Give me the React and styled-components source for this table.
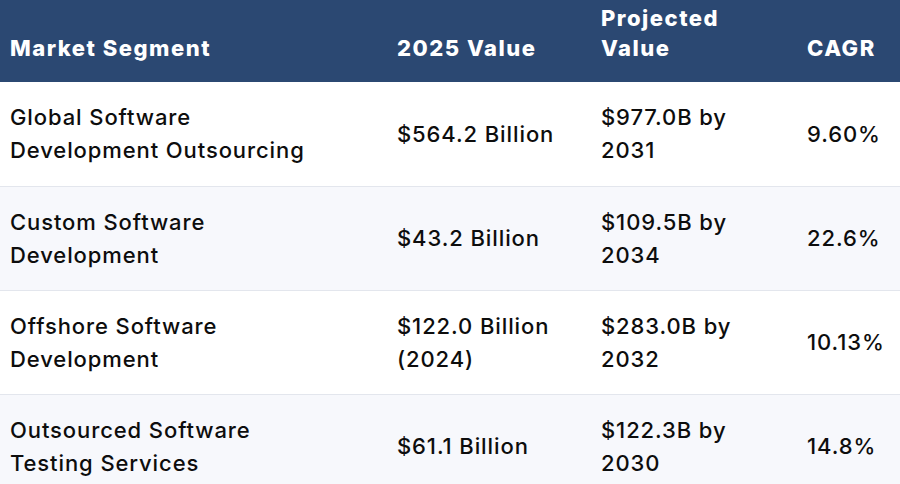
import styled, { createGlobalStyle } from "styled-components";

const GlobalStyle = createGlobalStyle`
  html, body {
    margin: 0;
    padding: 0;
    background: #ffffff;
  }
  body {
    font-family: Inter, "Open Sans", sans-serif;
    overflow: hidden;
  }
`;

const Table = styled.div`
  display: grid;
  grid-template-columns: 387px 204px 206px 103px;
  width: 900px;
`;

const HeadCell = styled.div`
  background: #2b4872;
  color: #ffffff;
  font-weight: 800;
  font-size: 22px;
  line-height: 30px;
  letter-spacing: 1.5px;
  padding: 3px 10px 19px;
  height: 82px;
  box-sizing: border-box;
  display: flex;
  align-items: flex-end;
`;

const Cell = styled.div`
  background: ${(p) => (p.$alt ? "#f7f8fc" : "#ffffff")};
  color: #0d0d0d;
  font-size: 22px;
  font-weight: 500;
  line-height: 33px;
  letter-spacing: 0.9px;
  padding: 0 10px;
  height: 104px;
  box-sizing: border-box;
  border-top: ${(p) => (p.$first ? "none" : "1px solid #e3e6ed")};
  display: flex;
  align-items: center;
`;

const headers = ["Market Segment", "2025 Value", "Projected\nValue", "CAGR"];

const rows = [
  ["Global Software\nDevelopment Outsourcing", "$564.2 Billion", "$977.0B by\n2031", "9.60%"],
  ["Custom Software\nDevelopment", "$43.2 Billion", "$109.5B by\n2034", "22.6%"],
  ["Offshore Software\nDevelopment", "$122.0 Billion\n(2024)", "$283.0B by\n2032", "10.13%"],
  ["Outsourced Software\nTesting Services", "$61.1 Billion", "$122.3B by\n2030", "14.8%"],
];

const Lines = ({ text }) => (
  <span>
    {text.split("\n").map((l, i) => (
      <span key={i}>
        {i > 0 && <br />}
        {l}
      </span>
    ))}
  </span>
);

const App = () => {
  return (
    <>
      <GlobalStyle />
      <Table>
        {headers.map((h, i) => (
          <HeadCell key={i}>
            <Lines text={h} />
          </HeadCell>
        ))}
        {rows.map((r, ri) =>
          r.map((c, ci) => (
            <Cell key={ri + "-" + ci} $alt={ri % 2 === 1} $first={ri === 0}>
              <Lines text={c} />
            </Cell>
          ))
        )}
      </Table>
    </>
  );
};

export default App;
